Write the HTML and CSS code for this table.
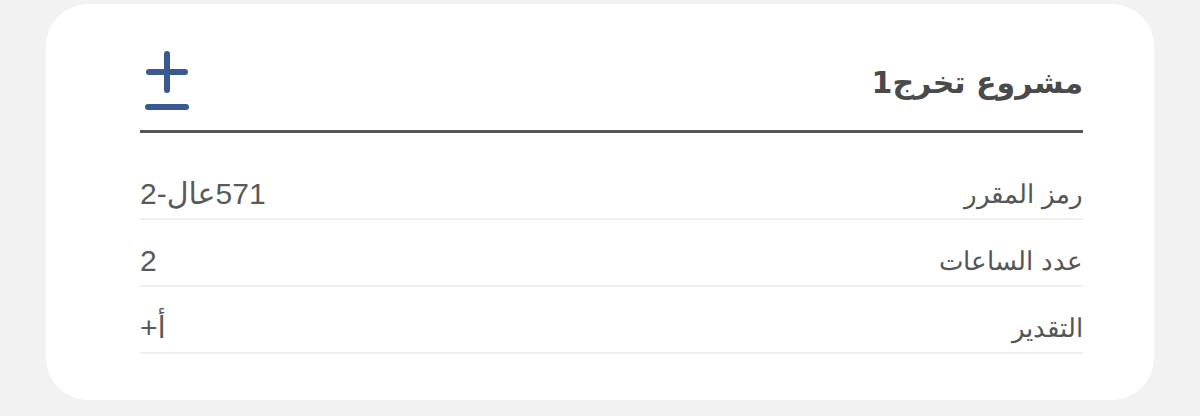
FILE: index.html
```html
<!DOCTYPE html>
<html lang="ar" dir="rtl">
<head>
<meta charset="utf-8">
<link rel="stylesheet" href="styles.css">
</head>
<body>
<div class="card">
  <div class="header">
    <h1 class="title">مشروع تخرج1</h1>
    <svg class="pm" width="44" height="60" viewBox="0 0 44 60">
      <g stroke="#3a5993" stroke-width="6" stroke-linecap="round" fill="none">
        <line x1="22" y1="4" x2="22" y2="40"/>
        <line x1="4" y1="22" x2="40" y2="22"/>
        <line x1="3" y1="57" x2="41" y2="57"/>
      </g>
    </svg>
  </div>
  <div class="rows">
    <div class="row"><span class="label">رمز المقرر</span><span class="value" dir="rtl">571عال-2</span></div>
    <div class="row"><span class="label">عدد الساعات</span><span class="value">2</span></div>
    <div class="row"><span class="label">التقدير</span><span class="value">أ+</span></div>
  </div>
</div>
</body>
</html>
```
FILE: styles.css
```css
html, body {
  margin: 0;
  padding: 0;
  background: #f2f2f2;
  width: 1200px;
  height: 416px;
  overflow: hidden;
}
.card {
  box-sizing: border-box;
  margin: 4px 46px 0 46px;
  width: 1108px;
  height: 396px;
  background: #ffffff;
  border-radius: 42px;
  padding: 0 71px 0 94px;
  font-family: "DejaVu Sans", "Liberation Sans", sans-serif;
}
.header {
  display: flex;
  align-items: flex-end;
  justify-content: space-between;
  border-bottom: 3px solid #555555;
  padding-bottom: 23px;
  box-sizing: border-box;
  height: 129px;
}
.title {
  margin: 0 0 4px 0;
  font-size: 30px;
  font-weight: bold;
  color: #4a4a4a;
  line-height: 40px;
}
.pm {
  display: block;
  margin-left: 5px;
  margin-bottom: -3px;
}
.rows {
  display: flex;
  flex-direction: column;
  padding-top: 19px;
}
.row {
  display: flex;
  justify-content: space-between;
  align-items: flex-end;
  border-bottom: 2px solid #efefef;
  padding-bottom: 8px;
  box-sizing: border-box;
  height: 67px;
  line-height: 32px;
}
.row:first-child { height: 68px; }
.label {
  font-size: 26px;
  color: #555555;
  font-weight: 300;
}
.value {
  font-family: "Liberation Sans", "DejaVu Sans", sans-serif;
  font-size: 30px;
  color: #5a5a5a;
}
```
